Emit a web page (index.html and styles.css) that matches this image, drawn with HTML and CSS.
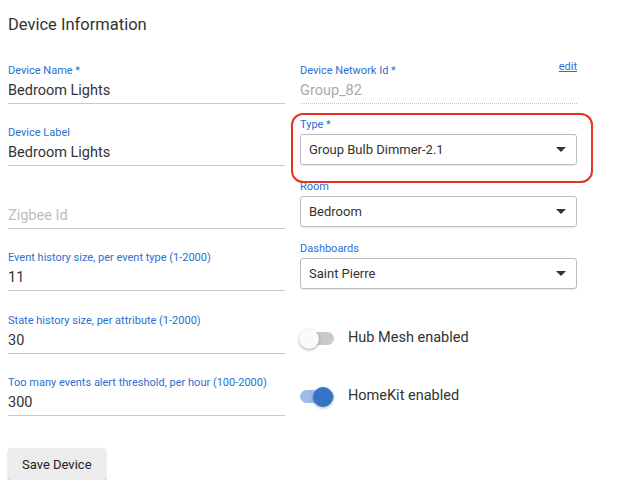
FILE: index.html
```html
<!DOCTYPE html>
<html lang="en">
<head>
  <meta charset="UTF-8">
  <title>Device Information</title>
  <link rel="stylesheet" href="styles.css">
</head>
<body>
  <div class="page">
    <h2>Device Information</h2>

    <div class="form-grid">
      <div class="col">
        <div class="field">
          <label for="name">Device Name *</label>
          <input type="text" id="name" value="Bedroom Lights">
        </div>
        <div class="field">
          <label for="label">Device Label</label>
          <input type="text" id="label" value="Bedroom Lights">
        </div>
        <div class="field">
          <label for="zigbee"></label>
          <input type="text" id="zigbee" placeholder="Zigbee Id">
        </div>
        <div class="field">
          <label for="events">Event history size, per event type (1-2000)</label>
          <input type="text" id="events" value="11">
        </div>
        <div class="field">
          <label for="states">State history size, per attribute (1-2000)</label>
          <input type="text" id="states" value="30">
        </div>
        <div class="field">
          <label for="alert">Too many events alert threshold, per hour (100-2000)</label>
          <input type="text" id="alert" value="300">
        </div>
      </div>

      <div class="col">
        <div class="field disabled">
          <div class="label-row">
            <label for="dni">Device Network Id *</label>
            <a href="#" class="edit">edit</a>
          </div>
          <input type="text" id="dni" value="Group_82" readonly>
        </div>

        <div class="field select-field highlighted">
          <label>Type *</label>
          <div class="select"><span>Group Bulb Dimmer-2.1</span><i class="arrow"></i></div>
          <div class="highlight"></div>
        </div>
        <div class="field select-field">
          <label>Room</label>
          <div class="select"><span>Bedroom</span><i class="arrow"></i></div>
        </div>
        <div class="field select-field">
          <label>Dashboards</label>
          <div class="select"><span>Saint Pierre</span><i class="arrow"></i></div>
        </div>

        <div class="toggle toggle-first">
          <span class="switch"><span class="track"></span><span class="thumb"></span></span>
          <span class="toggle-text">Hub Mesh enabled</span>
        </div>
        <div class="toggle">
          <span class="switch on"><span class="track"></span><span class="thumb"></span></span>
          <span class="toggle-text">HomeKit enabled</span>
        </div>
      </div>
    </div>

    <button class="save">Save Device</button>
  </div>
</body>
</html>
```

FILE: styles.css
```css
body {
  margin: 0;
  font-family: Roboto, "Liberation Sans", Arial, sans-serif;
  background: #fff;
  color: #333;
}

.page {
  padding: 0 8px;
}

h2 {
  margin: 13px 0 26px;
  font-size: 16.5px;
  font-weight: 400;
  line-height: 24px;
  color: #333;
}

.form-grid {
  display: grid;
  grid-template-columns: 277px 277px;
  column-gap: 15px;
  align-items: start;
}

.col {
  display: flex;
  flex-direction: column;
}

.field {
  display: flex;
  flex-direction: column;
}

.col:first-child .field + .field {
  margin-top: 21px;
}

/* the rows in the left column are 62-63px apart, not a round number */
.col:first-child .field:nth-child(odd) {
  margin-top: 22px;
}

.col:first-child .field:first-child {
  margin-top: 0;
}

label {
  display: block;
  height: 16px;
  font-size: 11px;
  line-height: 16px;
  color: #2a6fcf;
}

input {
  height: 24px;
  padding: 0;
  margin: 0;
  border: none;
  border-bottom: 1px solid #c8c8c8;
  font: inherit;
  font-size: 14.5px;
  line-height: 24px;
  color: #333;
  outline: none;
  background: transparent;
}

input::placeholder {
  color: #bdbdbd;
}

.disabled input {
  color: #aaa;
  border-bottom: 1px dotted #c4c4c4;
}

.label-row {
  display: flex;
  justify-content: space-between;
  align-items: flex-start;
}

.edit {
  margin-top: -4px;
  font-size: 11px;
  line-height: 16px;
  color: #2a6fcf;
}

.select-field {
  margin-top: 13px;
}

.select-field + .select-field {
  margin-top: 14px;
}

.select-field label {
  margin-bottom: 1px;
}

.select {
  display: flex;
  align-items: center;
  justify-content: space-between;
  box-sizing: border-box;
  height: 31px;
  padding: 0 10px 0 8px;
  border: 1px solid #bcbcbc;
  border-radius: 3px;
  box-shadow: 0 1px 1px rgba(0, 0, 0, 0.08);
  font-size: 13px;
  color: #333;
}

.arrow {
  width: 0;
  height: 0;
  border-left: 5px solid transparent;
  border-right: 5px solid transparent;
  border-top: 5px solid #333;
}

.highlighted {
  position: relative;
}

.highlight {
  position: absolute;
  top: -4px;
  left: -9px;
  right: -16px;
  bottom: -18px;
  border: 2px solid #e5331f;
  border-radius: 12px;
  pointer-events: none;
}

.toggle {
  display: flex;
  align-items: center;
  height: 24px;
  margin-top: 34px;
}

.toggle-first {
  margin-top: 38px;
}

.switch {
  position: relative;
  width: 34px;
  height: 20px;
  flex-shrink: 0;
}

.track {
  position: absolute;
  top: 3px;
  left: 0;
  width: 34px;
  height: 13px;
  border-radius: 7px;
  background: #c9c9c9;
}

.thumb {
  position: absolute;
  top: 0;
  left: -1px;
  width: 20px;
  height: 20px;
  border-radius: 50%;
  background: #fafafa;
  box-shadow: 0 1px 3px rgba(0, 0, 0, 0.35);
}

.switch.on .track {
  background: #9dbce8;
}

.switch.on .thumb {
  left: 13px;
  background: #3573c8;
}

.toggle-text {
  margin-left: 14px;
  padding-bottom: 3px;
  font-size: 14.5px;
  color: #333;
}

.save {
  margin-top: 32px;
  height: 32px;
  padding: 0 14px;
  border: none;
  border-radius: 3px;
  background: #ececec;
  box-shadow: 0 2px 2px rgba(0, 0, 0, 0.22), 0 0 1px rgba(0, 0, 0, 0.12);
  font-family: inherit;
  font-size: 13px;
  color: #222;
  cursor: pointer;
}
```
